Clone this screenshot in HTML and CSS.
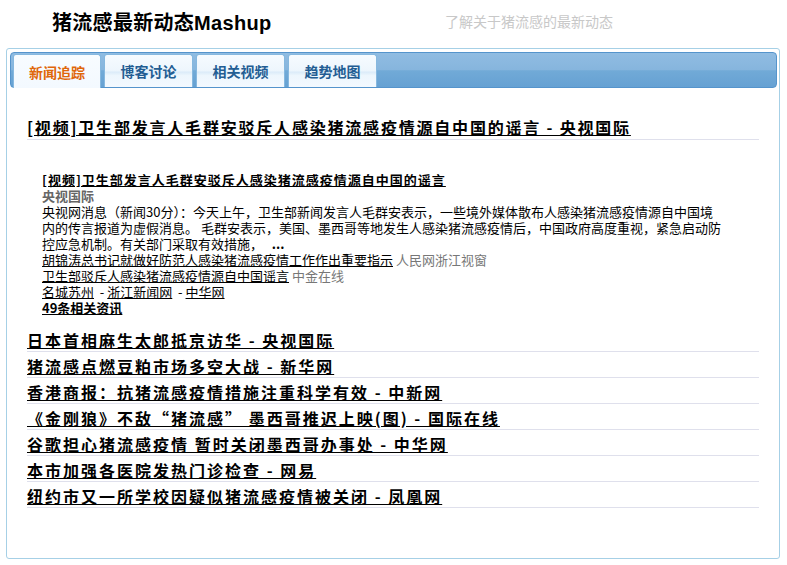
FILE: index.html
```html
<!DOCTYPE html>
<html lang="zh-CN">
<head>
<meta charset="utf-8">
<title>猪流感最新动态Mashup</title>
<link rel="stylesheet" href="styles.css">
</head>
<body>
<div class="header">
  <div class="title">猪流感最新动态Mashup</div>
  <div class="subtitle">了解关于猪流感的最新动态</div>
</div>
<div class="panel">
  <div class="tabbar">
    <div class="tab active">新闻追踪</div>
    <div class="tab">博客讨论</div>
    <div class="tab">相关视频</div>
    <div class="tab">趋势地图</div>
  </div>
  <div class="content">
    <div class="row first"><a href="#" class="hl">[视频]卫生部发言人毛群安驳斥人感染猪流感疫情源自中国的谣言 - 央视国际</a></div>
    <div class="detail">
      <div class="line"><a href="#" class="dtitle">[视频]卫生部发言人毛群安驳斥人感染猪流感疫情源自中国的谣言</a></div>
      <div class="line src">央视国际</div>
      <div class="line">央视网消息（新闻30分）：今天上午，卫生部新闻发言人毛群安表示，一些境外媒体散布人感染猪流感疫情源自中国境<br>内的传言报道为虚假消息。 毛群安表示，美国、墨西哥等地发生人感染猪流感疫情后，中国政府高度重视，紧急启动防<br>控应急机制。有关部门采取有效措施，&nbsp;&nbsp; <b>...</b></div>
      <div class="line"><a href="#">胡锦涛总书记就做好防范人感染猪流感疫情工作作出重要指示</a> <span class="gray">人民网浙江视窗</span></div>
      <div class="line"><a href="#">卫生部驳斥人感染猪流感疫情源自中国谣言</a> <span class="gray">中金在线</span></div>
      <div class="line"><a href="#">名城苏州</a> &nbsp;- <a href="#">浙江新闻网</a> &nbsp;- <a href="#">中华网</a></div>
      <div class="line"><a href="#" class="more">49条相关资讯</a></div>
    </div>
    <div class="row"><a href="#" class="hl">日本首相麻生太郎抵京访华 - 央视国际</a></div>
    <div class="row"><a href="#" class="hl">猪流感点燃豆粕市场多空大战 - 新华网</a></div>
    <div class="row"><a href="#" class="hl">香港商报：抗猪流感疫情措施注重科学有效 - 中新网</a></div>
    <div class="row"><a href="#" class="hl">《金刚狼》不敌“猪流感” 墨西哥推迟上映(图) - 国际在线</a></div>
    <div class="row"><a href="#" class="hl">谷歌担心猪流感疫情 暂时关闭墨西哥办事处 - 中华网</a></div>
    <div class="row"><a href="#" class="hl">本市加强各医院发热门诊检查 - 网易</a></div>
    <div class="row"><a href="#" class="hl">纽约市又一所学校因疑似猪流感疫情被关闭 - 凤凰网</a></div>
  </div>
</div>
</body>
</html>
```

FILE: styles.css
```css
* { box-sizing: border-box; }
body {
  margin: 0;
  background: #fff;
  font-family: "Liberation Sans", "Noto Sans CJK SC", sans-serif;
  color: #000;
}
.header {
  display: flex;
  align-items: center;
  height: 42px;
}
.title {
  width: 393px;
  margin-left: 52px;
  font-size: 20px;
  font-weight: bold;
  letter-spacing: 0.3px;
  color: #000;
}
.subtitle {
  font-size: 14px;
  color: #c8c8c8;
  font-family: "Noto Sans CJK SC", sans-serif;
}
.panel {
  margin: 6px 0 0 6px;
  width: 774px;
  height: 511px;
  border: 1px solid #a6d0e6;
  border-radius: 3px;
}
.tabbar {
  margin: 3px 2px 0 3px;
  height: 36px;
  border: 1px solid #5594cc;
  border-radius: 4px;
  background: linear-gradient(#90bce2, #86b5dd 50%, #71aad7 52%, #66a1d3);
  display: flex;
  align-items: flex-end;
  padding-left: 2px;
}
.tab {
  width: 89px;
  height: 33px;
  margin-right: 3px;
  border: 1px solid #86b8df;
  border-bottom: none;
  border-radius: 3px 3px 0 0;
  background: linear-gradient(#f6fbff, #eef6fd 48%, #dcecf9 54%, #edf6fd 64%, #f3f9ff);
  display: flex;
  align-items: center;
  justify-content: center;
  font-family: "Noto Sans CJK SC", sans-serif;
  font-size: 14px;
  font-weight: bold;
  color: #235d93;
}
.tab.active {
  width: 88px;
  height: 34px;
  margin-bottom: -1px;
  background: linear-gradient(#f8fcff, #f3f9ff);
  color: #e0670a;
}
.content {
  padding: 25px 20px 0 20px;
  font-family: "Noto Sans CJK SC", sans-serif;
}
.row {
  padding-top: 4px;
  line-height: 21px;
  border-bottom: 1px solid #dfe0ec;
}
.row.first { padding-bottom: 1px; }
.hl {
  font-size: 16px;
  font-weight: bold;
  letter-spacing: 2px;
  color: #000;
  text-decoration: underline;
}
.first .hl { letter-spacing: 1.8px; }
a { color: #000; }
.detail {
  margin: 32px 0 10px 15px;
  font-size: 13px;
  line-height: 16px;
  color: #000;
}
.line { white-space: nowrap; }
.dtitle {
  font-weight: bold;
  letter-spacing: 1px;
}
.src {
  font-weight: bold;
  color: #666;
}
.gray { color: #777; }
.more { font-weight: bold; }
```
